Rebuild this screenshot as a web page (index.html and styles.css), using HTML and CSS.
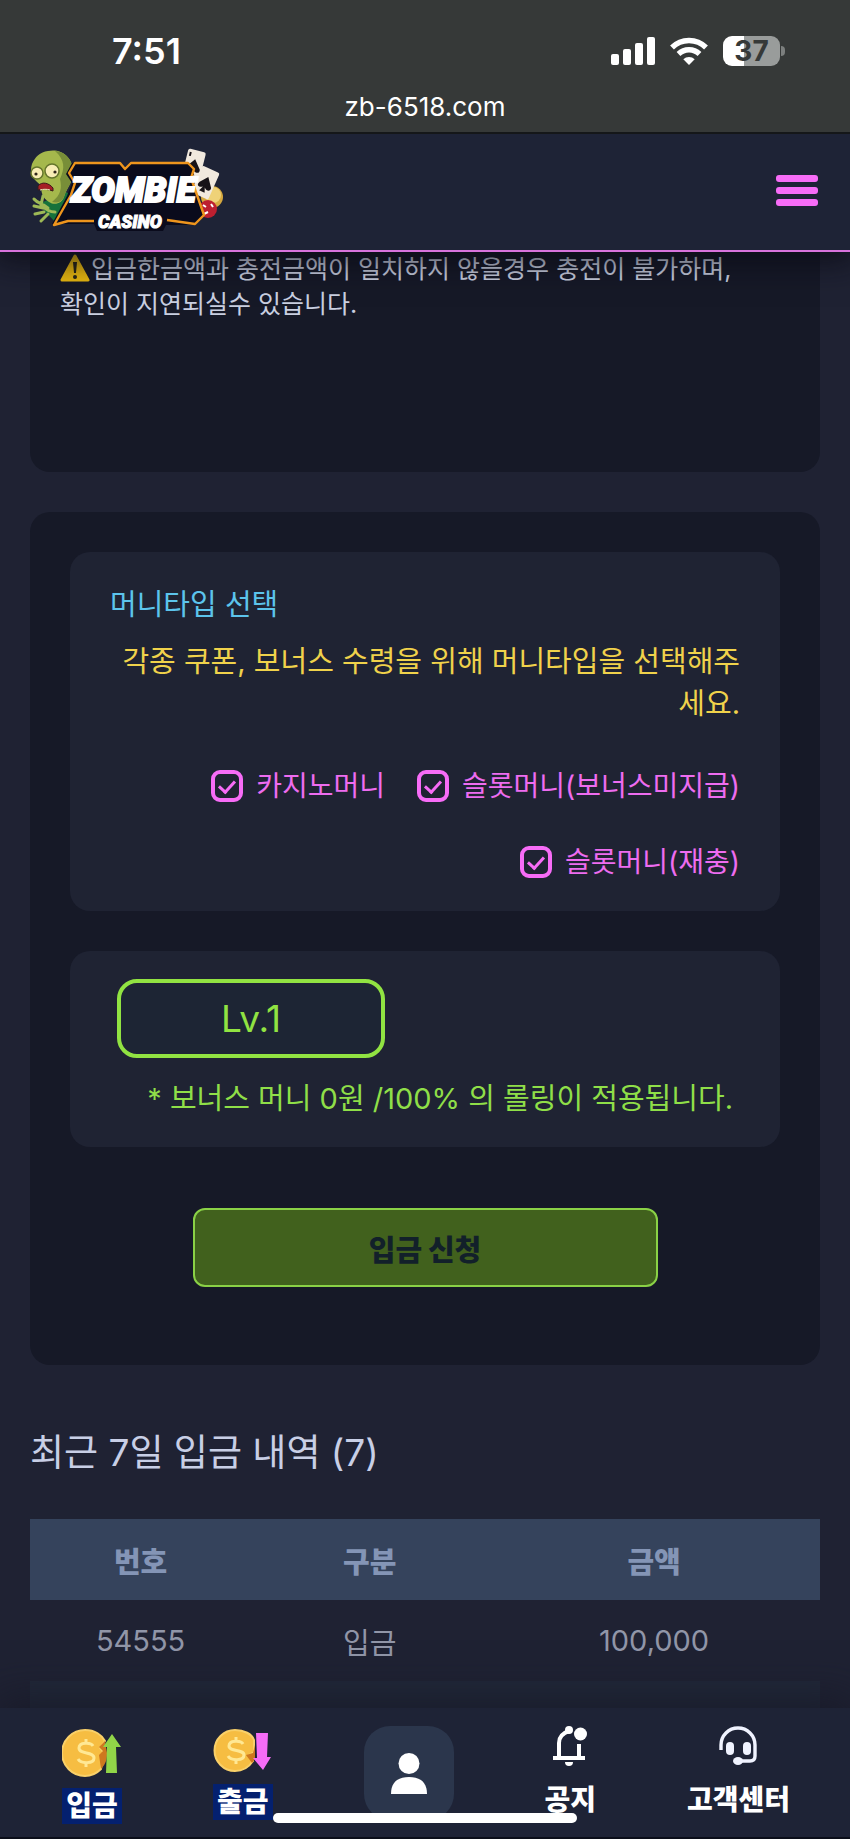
FILE: index.html
```html
<!DOCTYPE html>
<html lang="ko">
<head>
<meta charset="utf-8">
<meta name="viewport" content="width=device-width, initial-scale=1">
<title>Zombie Casino</title>
<link rel="stylesheet" href="styles.css">
</head>
<body>
<div class="screen">
  <div class="browser">
    <div class="status">
      <time class="clock">7:51</time>
      <div class="indicators">
        <svg width="44" height="28" viewBox="0 0 44 28" fill="#fff" aria-hidden="true"><rect x="0" y="17" width="8" height="11" rx="2"/><rect x="12" y="12" width="8" height="16" rx="2"/><rect x="24" y="6" width="8" height="22" rx="2"/><rect x="36" y="0" width="8" height="28" rx="2"/></svg>
        <svg width="38" height="28" viewBox="0 0 38 28" aria-hidden="true"><g fill="none" stroke="#fff" stroke-width="5.4"><path d="M2 10.500a24 24 0 0 1 34 0"/><path d="M8.500 17a15 15 0 0 1 21 0"/></g><path d="M13.300 22.300a8.300 8.300 0 0 1 11.400 0L19 28z" fill="#fff"/></svg>
        <div class="battery"><span class="battery-level">37</span><span class="battery-tip"></span></div>
      </div>
    </div>
    <div class="address">zb-6518.com</div>
  </div>

  <header class="header">
    <a href="#" class="logo" aria-label="Zombie Casino">
      <svg width="196" height="84" viewBox="0 0 196 84">
        <path d="M9 57c9-8 20-4 27-13l9 5-8 25-9 3z" fill="#16723b"/>
        <path d="M18 3c13-3 26 6 25 23-1 10-7 15-9 23-2 6-9 9-15 5-7-4-8-11-8-17C3 32-1 25 2 16 5 9 10 4 18 3z" fill="#a5b84c"/>
        <path d="M25 3c12 1 19 11 18 23-1 9-7 16-9 23-3 6-8 6-12 5 9-7 10-14 8-23 5-11 5-19-5-28z" fill="#788e38"/>
        <circle cx="7" cy="25" r="6" fill="#f8edb5" stroke="#65752c" stroke-width="1.500"/><circle cx="22" cy="23" r="7" fill="#f8edb5" stroke="#65752c" stroke-width="1.500"/><circle cx="6" cy="26" r="1.600" fill="#30261b"/><circle cx="25" cy="24" r="1.600" fill="#30261b"/>
        <path d="M8 38c4-5 11-3 15 2v3c-5-2-10-2-15-1z" fill="#a51f25" stroke="#3a1b1b"/><path d="M10 42c3-1 7-1 10 0" stroke="#fff0c0" fill="none"/>
        <path d="M18 60c-5-5-10-4-14-9m9 9-9-2m10 6-9 2m13 0-7 7m0-16 2-9m-2 9c4 4 8 7 14 7" fill="none" stroke="#9db856" stroke-width="3" stroke-linecap="round"/>
        <g transform="rotate(14 163 20)"><rect x="154" y="2" width="18" height="28" rx="2" fill="#f1e9de"/><path d="m163 11 7 9c1 4-3 5-6 2l2 5h-6l2-5c-4 3-7 1-5-3z" fill="#171217"/><path d="M157 5v4" stroke="#171217" stroke-width="2"/></g>
        <circle cx="182" cy="49" r="11" fill="#d6a83f"/><circle cx="183" cy="47" r="8" fill="#efd278"/>
        <g transform="rotate(24 175 34)"><rect x="166" y="20" width="19" height="29" rx="2" fill="#f1e9de"/><path d="m176 28 7 9c1 4-3 5-6 2l2 5h-6l2-5c-4 3-7 1-5-3z" fill="#171217"/></g>
        <circle cx="178" cy="61" r="9" fill="#bd1f30"/><path d="m173 57 3 2m5-3 2 3m-9 7 4-2" stroke="#fff" stroke-width="2"/>
        <path d="M42 15h47l6 6 6-6h57l6 6-3 9 12 37-9 10h-28l-3 6H67l-3-7H32l-10 0 15-28 5-13-6-9z" fill="#0a0b1c"/>
        <path d="M64 73H38L24 77l17-30 4-12-6-10 6-10h45l5 6 6-6h57l6 6-3 9 13 37-9 9-28-4" fill="none" stroke="#ee951d" stroke-width="2.400" stroke-linejoin="round"/>
        <text x="41" y="54" class="logo-main">ZOMBIE</text>
        <text x="68" y="80" class="logo-sub">CASINO</text>
      </svg>
    </a>
    <button class="menu" type="button" aria-label="메뉴"><span></span><span></span><span></span></button>
  </header>

  <main class="content">
    <section class="notice">
      <p><svg class="warn" viewBox="0 0 30 28" role="img" aria-label="주의"><path d="M15 2 28 26H2z" fill="#e9b910" stroke="#e9b910" stroke-width="3" stroke-linejoin="round"/><path d="M13 8h4l-1 11h-2z" fill="#292718"/><circle cx="15" cy="23" r="2" fill="#292718"/></svg>입금한금액과 충전금액이 일치하지 않을경우 충전이 불가하며,<br>확인이 지연되실수 있습니다.</p>
    </section>

    <form class="panel">
      <fieldset class="box money">
        <legend class="money-title">머니타입 선택</legend>
        <p class="money-help">각종 쿠폰, 보너스 수령을 위해 머니타입을 선택해주세요.</p>
        <div class="choices">
          <label><input type="checkbox" checked>카지노머니</label>
          <label><input type="checkbox" checked>슬롯머니(보너스미지급)</label>
          <label><input type="checkbox" checked>슬롯머니(재충)</label>
        </div>
      </fieldset>
      <div class="box bonus">
        <button type="button" class="level">Lv.1</button>
        <p class="bonus-text">* 보너스 머니 0원 /100% 의 롤링이 적용됩니다.</p>
      </div>
      <button type="submit" class="submit">입금 신청</button>
    </form>

    <section class="history">
      <h2>최근 7일 입금 내역 (7)</h2>
      <table>
        <colgroup><col class="col-no"><col class="col-kind"><col class="col-sum"></colgroup>
        <thead><tr><th>번호</th><th>구분</th><th>금액</th></tr></thead>
        <tbody>
          <tr><td>54555</td><td>입금</td><td>100,000</td></tr>
          <tr><td></td><td></td><td></td></tr>
        </tbody>
      </table>
    </section>
  </main>

  <nav class="nav">
    <a href="#" class="nav-item marked">
      <svg width="60" height="48" viewBox="0 0 60 48" aria-hidden="true"><path d="M23 1c10 0 17 5 20 11l-5 7 4 5-3 16c-4 4-10 7-16 7a23 23 0 0 1 0-46z" fill="#f6bd42" stroke="#f9d069" stroke-width="2"/><path d="m43 12-6 6 4 4-4 4 2 14c5-5 6-10 6-16z" fill="#ce781f"/><path d="M31 17c-2-4-14-4-14 2 0 7 15 3 15 10 0 6-13 6-16 1M24 10v5M24 33v5" fill="none" stroke="#ffe894" stroke-width="3"/><path d="M50 5 59 18h-5l1 26H44l1-26h-4z" fill="#91d548"/></svg>
      <span>입금</span>
    </a>
    <a href="#" class="nav-item marked">
      <svg width="60" height="44" viewBox="0 0 60 44" aria-hidden="true"><path d="M22 1c9 0 17 4 19 10v12l-5 3 4 6c-4 6-11 10-18 10a20.500 20.500 0 0 1 0-41z" fill="#f6bd42" stroke="#f9d069" stroke-width="2"/><path d="m42 16-2 8-7 2 6 8 3-4z" fill="#ce781f"/><path d="M30 15c-2-4-14-4-14 2 0 6 15 3 15 9 0 6-13 6-16 1M23 8v5M23 30v5" fill="none" stroke="#ffe894" stroke-width="3"/><path d="M43 4h12l-1 24h4L50 41 40 29h4z" fill="#f66cf7"/></svg>
      <span>출금</span>
    </a>
    <a href="#" class="nav-profile" aria-label="내 정보">
      <svg width="36" height="41" viewBox="0 0 36 41" fill="#fff" aria-hidden="true"><circle cx="18" cy="10.500" r="10.500"/><path d="M0 41c0-12 7-17 18-17s18 5 18 17z"/></svg>
    </a>
    <a href="#" class="nav-item">
      <svg width="40" height="40" viewBox="0 0 40 40" aria-hidden="true"><g fill="none" stroke="#fff" stroke-width="4"><path d="M9 32V17c0-6 4-10 10-12"/><path d="M29 18v14"/><path d="M3 32h32"/></g><circle cx="19" cy="4" r="4" fill="#fff"/><circle cx="30.500" cy="8" r="6.500" fill="#fff"/><path d="M15 36h8a4 4 0 0 1-8 0z" fill="#fff"/></svg>
      <span>공지</span>
    </a>
    <a href="#" class="nav-item">
      <svg width="40" height="40" viewBox="0 0 40 40" aria-hidden="true"><path d="M3 24v-5a17 17 0 0 1 34 0v11c0 4-2 5-5 5H20" fill="none" stroke="#f0f3ff" stroke-width="3.400"/><rect x="8" y="16" width="8" height="13" rx="4" fill="#f0f3ff"/><rect x="25" y="16" width="8" height="13" rx="4" fill="#f0f3ff"/><ellipse cx="20" cy="35" rx="5" ry="4" fill="#f0f3ff"/></svg>
      <span>고객센터</span>
    </a>
    <div class="home-bar"></div>
  </nav>
</div>
</body>
</html>
```
FILE: styles.css
```css
* { box-sizing: border-box; }
body {
  margin: 0;
  background: #1f2233;
  color: #c9cfe0;
  font-family: Inter, "Noto Sans CJK KR", sans-serif;
}
p, h2 { margin: 0; font-weight: 400; }
a { color: inherit; text-decoration: none; }
button, input { font: inherit; }
svg { flex: none; }

.screen {
  display: flex;
  flex-direction: column;
  height: 100vh;
}

.browser {
  position: relative;
  z-index: 3;
  background: #363938;
  border-bottom: 2px solid #151719;
  padding-top: 28px;
  color: #fff;
}
.status {
  display: flex;
  align-items: center;
  justify-content: space-between;
  height: 46px;
  padding: 0 65px 0 112px;
}
.clock { font-size: 36px; font-weight: 600; }
.indicators { display: flex; align-items: center; gap: 15px; }
.battery { display: flex; align-items: center; gap: 1px; }
.battery-level {
  width: 57px;
  height: 30px;
  border-radius: 9px;
  background: linear-gradient(90deg, #fff 37%, #999c9b 37%);
  color: #363938;
  font-size: 28px;
  font-weight: 700;
  line-height: 30px;
  text-align: center;
}
.battery-tip {
  width: 4px;
  height: 10px;
  border-radius: 0 5px 5px 0;
  background: #7c7f7e;
}
.address {
  height: 58px;
  font-size: 26px;
  line-height: 66px;
  text-align: center;
}

.header {
  position: relative;
  z-index: 2;
  display: flex;
  align-items: center;
  justify-content: space-between;
  height: 118px;
  padding: 0 32px 4px 30px;
  background: #1e2336;
  border-bottom: 2px solid #d873dc;
  box-shadow: 0 4px 30px 6px rgba(8, 9, 18, 0.7);
}
.logo { display: flex; }
.logo-main, .logo-sub {
  font-family: Roboto, sans-serif;
  font-style: italic;
  font-weight: 900;
  fill: #fff;
  stroke: #fff;
}
.logo-main { font-size: 35px; stroke-width: 2px; }
.logo-sub { font-size: 18px; }
.menu {
  display: flex;
  flex-direction: column;
  gap: 5px;
  padding: 0;
  border: 0;
  background: none;
}
.menu span {
  width: 42px;
  height: 7px;
  border-radius: 3px;
  background: #f76cf7;
}

.content {
  flex: 1;
  min-height: 0;
  overflow: auto;
  scrollbar-width: none;
  padding: 0 30px;
}
.notice {
  min-height: 220px;
  padding: 0 30px;
  border-radius: 0 0 20px 20px;
  background: #161927;
  font-size: 25px;
  line-height: 35px;
}
.warn { width: 30px; height: 28px; margin-right: 1px; vertical-align: -4px; }

.panel {
  display: flex;
  flex-direction: column;
  gap: 40px;
  margin-top: 40px;
  padding: 40px 40px 78px;
  border-radius: 20px;
  background: #161927;
}
.box {
  margin: 0;
  border: 0;
  border-radius: 20px;
  background: #1f2333;
}
.money { padding: 32px 40px 31px; }
.money-title {
  float: left;
  width: 100%;
  padding: 0;
  color: #5cc4ec;
  font-size: 29px;
  line-height: 42px;
}
.money-help {
  clear: both;
  padding-top: 15px;
  color: #f0d24b;
  font-size: 29px;
  line-height: 42px;
  text-align: right;
}
.choices {
  display: flex;
  flex-wrap: wrap;
  justify-content: flex-end;
  gap: 40px 32px;
  margin-top: 43px;
}
.choices label {
  display: flex;
  align-items: center;
  gap: 13px;
  color: #ee6cf0;
  font-size: 28px;
  line-height: 36px;
}
.choices input {
  appearance: none;
  display: grid;
  place-items: center;
  width: 32px;
  height: 32px;
  margin: 0;
  border: 4px solid #f76cf7;
  border-radius: 9px;
}
.choices input:checked::before {
  content: "";
  width: 7px;
  height: 13px;
  margin-bottom: 3px;
  border: solid #f76cf7;
  border-width: 0 3px 3px 0;
  transform: rotate(42deg);
}
.bonus { padding: 28px 47px 27px; }
.level {
  display: block;
  width: 268px;
  height: 79px;
  border: 4px solid #91e342;
  border-radius: 20px;
  background: #1d2534;
  color: #91e342;
  font-size: 37px;
}
.bonus-text {
  margin-top: 20px;
  color: #8fdf48;
  font-size: 29px;
  line-height: 42px;
  text-align: right;
}
.submit {
  align-self: center;
  width: 465px;
  height: 79px;
  margin-top: 21px;
  border: 2px solid #8ad146;
  border-radius: 12px;
  background: #41611d;
  color: #12202a;
  font-size: 29px;
  font-weight: 900;
}

.history h2 {
  margin: 63px 0 41px;
  color: #c8cfe6;
  font-size: 37px;
  line-height: 50px;
}
table {
  width: 100%;
  border-collapse: collapse;
  table-layout: fixed;
  font-size: 29px;
  text-align: center;
}
th, td { height: 81px; padding: 0; }
th { background: #35435c; color: #8495b6; font-weight: 900; }
td { color: #9196a8; }
tbody tr:nth-child(even) { background: #212839; }
.col-no { width: 28%; }
.col-kind { width: 30%; }
.col-sum { width: 42%; }

.nav {
  position: relative;
  z-index: 2;
  display: flex;
  align-items: flex-start;
  justify-content: space-between;
  height: 131px;
  padding: 18px 60px 0 62px;
  background: #1e2336;
  border-bottom: 2px solid #0b0e1a;
  box-shadow: 0 -4px 40px 4px rgba(22, 24, 38, 0.8);
}
.nav-item {
  display: flex;
  flex-direction: column;
  align-items: center;
  gap: 16px;
  color: #fff;
  font-size: 28px;
  font-weight: 900;
  line-height: 36px;
}
.marked { padding-top: 3px; gap: 11px; }
.marked span { padding: 0 4px; background: #04206f; }
.nav-profile {
  display: grid;
  place-items: center;
  width: 90px;
  height: 94px;
  border-radius: 26px;
  background: #2b364c;
}
.home-bar {
  position: absolute;
  bottom: 14px;
  left: 50%;
  width: 304px;
  height: 10px;
  margin-left: -152px;
  border-radius: 5px;
  background: #fff;
}
```
